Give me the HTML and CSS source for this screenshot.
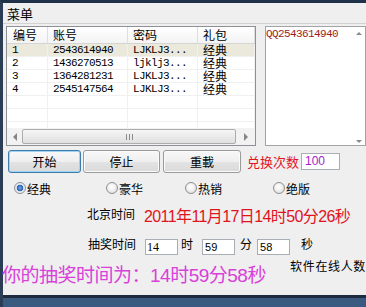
FILE: index.html
```html
<!DOCTYPE html>
<html>
<head>
<meta charset="utf-8">
<title>菜单</title>
<link rel="stylesheet" href="styles.css">
</head>
<body>
<div class="window">
  <div class="menubar">菜单</div>

  <div class="top">
    <div class="list">
      <div class="list-head">
        <div class="hcell">编号</div>
        <div class="hcell">账号</div>
        <div class="hcell">密码</div>
        <div class="hcell">礼包</div>
      </div>
      <div class="list-body">
        <div class="row sel">
          <div class="cell mono">1</div><div class="cell mono">2543614940</div><div class="cell mono">LJKLJ3...</div><div class="cell cjk">经典</div>
        </div>
        <div class="row">
          <div class="cell mono">2</div><div class="cell mono">1436270513</div><div class="cell mono">ljklj3...</div><div class="cell cjk">经典</div>
        </div>
        <div class="row">
          <div class="cell mono">3</div><div class="cell mono">1364281231</div><div class="cell mono">LJKLJ3...</div><div class="cell cjk">经典</div>
        </div>
        <div class="row">
          <div class="cell mono">4</div><div class="cell mono">2545147564</div><div class="cell mono">LJKLJ3...</div><div class="cell cjk">经典</div>
        </div>
        <div class="row"><div class="cell"></div><div class="cell"></div><div class="cell"></div><div class="cell"></div></div>
        <div class="row"><div class="cell"></div><div class="cell"></div><div class="cell"></div><div class="cell"></div></div>
        <div class="row row-partial"><div class="cell"></div><div class="cell"></div><div class="cell"></div><div class="cell"></div></div>
      </div>
      <div class="hscroll">
        <div class="sb-btn sb-left"><span class="tri-left"></span></div>
        <div class="thumb"><span class="grip"></span></div>
        <div class="sb-btn sb-right"><span class="tri-right"></span></div>
      </div>
    </div>

    <div class="memo">
      <div class="memo-text">QQ2543614940</div>
      <div class="vscroll"><span class="tri-up"></span><span class="tri-down"></span></div>
    </div>
  </div>

  <div class="btnrow">
    <div class="btn btn-focus btn-start">开始</div>
    <div class="btn btn-stop">停止</div>
    <div class="btn btn-reload">重載</div>
    <div class="exchange">兑换次数</div>
    <div class="numbox">100</div>
  </div>

  <div class="radios">
    <div class="radio-item"><span class="radio checked"></span><span class="rlabel">经典</span></div>
    <div class="radio-item"><span class="radio"></span><span class="rlabel">豪华</span></div>
    <div class="radio-item"><span class="radio"></span><span class="rlabel">热销</span></div>
    <div class="radio-item"><span class="radio"></span><span class="rlabel">绝版</span></div>
  </div>

  <div class="timerow">
    <div class="timelabel">北京时间</div>
    <div class="clock">2011年11月17日14时50分26秒</div>
  </div>

  <div class="drawrow">
    <div class="lbl">抽奖时间</div>
    <div class="field field-serif f-hour">14</div>
    <div class="lbl unit u-hour">时</div>
    <div class="field f-min">59</div>
    <div class="lbl unit u-min">分</div>
    <div class="field f-sec">58</div>
    <div class="lbl unit u-sec">秒</div>
  </div>

  <div class="bottomrow">
    <div class="draw-result">你的抽奖时间为：14时59分58秒</div>
    <div class="online">软件在线人数</div>
  </div>

  <div class="statusbar"></div>
</div>
</body>
</html>
```

FILE: styles.css
```css
* { box-sizing: border-box; }
html, body { margin: 0; padding: 0; }
body {
  width: 366px;
  height: 307px;
  overflow: hidden;
  background: #efefef;
  font-family: "Noto Sans CJK SC", "Liberation Sans", sans-serif;
  font-size: 12px;
  color: #000;
}
.window {
  width: 366px;
  height: 307px;
  display: flex;
  flex-direction: column;
  border-top: 3px solid #1f3049;
  border-left: 3px solid #2b3d55;
  background: #efefef;
}
.menubar {
  height: 21px;
  padding: 2px 0 0 4px;
  line-height: 18px;
  font-size: 13px;
  border-bottom: 1px solid #d2d2d2;
}

/* top section */
.top {
  display: flex;
  margin-top: 2px;
  height: 120px;
}
.list {
  margin-left: 3px;
  width: 250px;
  height: 120px;
  border: 1px solid #8e9096;
  background: #fff;
  display: flex;
  flex-direction: column;
}
.list-head {
  display: grid;
  grid-template-columns: 41px 80px 70px 57px;
  height: 17px;
  border-bottom: 1px solid #d5d5d5;
  background: linear-gradient(#ffffff, #f3f3f3);
}
.hcell {
  padding-left: 6px;
  line-height: 16px;
  border-right: 1px solid #dedede;
}
.hcell + .hcell { padding-left: 5px; }
.list-body {
  height: 84px;
}
.row {
  display: grid;
  grid-template-columns: 41px 80px 70px 57px;
  height: 13px;
  border-bottom: 1px solid #f0f0f0;
}
.row.row-partial {
  height: 6px;
  border-bottom: 0;
}
.row.sel { background: #ebe9db; }
.cell {
  padding-left: 5px;
  line-height: 12px;
  border-right: 1px solid #f0f0f0;
  white-space: nowrap;
}
.cjk { line-height: 12px; }
.mono {
  font-family: "Liberation Mono", monospace;
  font-size: 11px;
  letter-spacing: -0.6px;
}
.hscroll {
  height: 17px;
  display: flex;
  background: #f2f2f2;
}
.sb-btn {
  display: flex;
  align-items: center;
  justify-content: center;
}
.sb-left { width: 15px; }
.sb-right { width: 19px; }
.thumb {
  flex: 1;
  margin: 1px 0;
  border: 1px solid #acacac;
  border-radius: 2px;
  background: linear-gradient(#f6f6f6, #e0e0e0);
  display: flex;
  align-items: center;
  justify-content: center;
}
.grip {
  width: 7px;
  height: 6px;
  background: repeating-linear-gradient(90deg, #8a8a8a 0 1px, transparent 1px 3px);
}
.tri-left {
  width: 0; height: 0;
  border-top: 4px solid transparent;
  border-bottom: 4px solid transparent;
  border-right: 4px solid #858585;
}
.tri-right {
  width: 0; height: 0;
  border-top: 4px solid transparent;
  border-bottom: 4px solid transparent;
  border-left: 4px solid #858585;
}

.memo {
  margin-left: 9px;
  width: 101px;
  height: 120px;
  border: 1px solid #a3a3a3;
  background: #fff;
  display: flex;
}
.memo-text {
  flex: 1;
  padding-top: 1px;
  font-family: "Liberation Mono", monospace;
  font-size: 11px;
  letter-spacing: -0.6px;
  line-height: 12px;
  color: #a01c20;
}
.vscroll {
  width: 12px;
  display: flex;
  flex-direction: column;
  justify-content: space-between;
  align-items: center;
  padding: 5px 0 2px;
}
.tri-up {
  width: 0; height: 0;
  border-left: 3px solid transparent;
  border-right: 3px solid transparent;
  border-bottom: 3px solid #8a8a8a;
}
.tri-down {
  width: 0; height: 0;
  border-left: 3px solid transparent;
  border-right: 3px solid transparent;
  border-top: 3px solid #8a8a8a;
}

/* buttons row */
.btnrow {
  display: flex;
  align-items: flex-start;
  margin-top: 4px;
  height: 23px;
}
.btn {
  height: 23px;
  border: 1px solid #9a9a9a;
  border-radius: 3px;
  background: linear-gradient(#f8f8f8 0%, #efefef 50%, #e3e3e3 51%, #dadada 100%);
  box-shadow: inset 0 0 0 1px #fbfbfb;
  line-height: 21px;
  text-align: center;
  font-size: 12px;
}
.btn-focus {
  border-color: #3d7bad;
  box-shadow: inset 0 0 0 1px #9fd3f2;
}
.btn-start { margin-left: 5px; width: 73px; }
.btn-stop { margin-left: 2px; width: 77px; }
.btn-reload { margin-left: 3px; width: 78px; }
.exchange {
  margin-left: 6px;
  color: #e3161e;
  font-size: 13px;
  line-height: 23px;
}
.numbox {
  margin-left: 2px;
  margin-top: 3px;
  width: 39px;
  height: 17px;
  border: 1px solid #a9aeb5;
  background: #fff;
  padding-left: 3px;
  font-family: "Liberation Sans", sans-serif;
  font-size: 12px;
  line-height: 15px;
  color: #a41ccc;
}

/* radio row */
.radios {
  display: grid;
  grid-template-columns: 92px 79px 88px auto;
  margin-top: 8px;
  padding-left: 11px;
  height: 18px;
}
.radio-item {
  display: flex;
  align-items: flex-start;
}
.radio {
  width: 12px;
  height: 12px;
  margin-top: 1px;
  margin-right: 1px;
  border-radius: 50%;
  border: 1px solid #8d8f92;
  background: radial-gradient(circle at 45% 40%, #ffffff 0, #f2f2f2 40%, #d4d4d4 100%);
}
.radio.checked {
  background: radial-gradient(circle at 50% 50%, #6fa8e8 0, #2b62b4 3px, #dfe6ee 3.6px, #fafafa 100%);
}
.rlabel {
  line-height: 16px;
}

/* time row */
.timerow {
  display: flex;
  align-items: flex-start;
  margin-top: 5px;
  height: 23px;
  padding-left: 84px;
}
.timelabel { line-height: 20px; }
.clock {
  margin-left: 9px;
  margin-top: 3px;
  line-height: 20px;
  font-family: "Liberation Sans", "Noto Sans CJK SC", sans-serif;
  font-size: 16px;
  letter-spacing: -0.6px;
  color: #e1141c;
}

/* draw time row */
.drawrow {
  display: flex;
  align-items: flex-start;
  margin-top: 9px;
  height: 20px;
  padding-left: 85px;
}
.lbl { line-height: 16px; }
.field {
  margin-top: 3px;
  width: 33px;
  height: 16px;
  border: 1px solid #a9aeb5;
  background: #fff;
  padding-left: 2px;
  font-family: "Liberation Sans", sans-serif;
  font-size: 11px;
  line-height: 14px;
}
.field-serif {
  padding-left: 1px;
  font-family: "Liberation Serif", serif;
  font-size: 12px;
}
.f-hour { margin-left: 9px; }
.u-hour { margin-left: 3px; }
.f-min { margin-left: 9px; }
.u-min { margin-left: 5px; }
.f-sec { margin-left: 5px; }
.u-sec { margin-left: 11px; }

/* bottom */
.bottomrow {
  display: flex;
  justify-content: space-between;
  align-items: flex-start;
  margin-top: 2px;
  height: 30px;
}
.draw-result {
  margin-top: 7px;
  margin-left: -1px;
  font-family: "Liberation Sans", "Noto Sans CJK SC", sans-serif;
  font-size: 19px;
  line-height: 22px;
  letter-spacing: -0.5px;
  color: #d93fd9;
  white-space: nowrap;
}
.online {
  line-height: 16px;
  letter-spacing: 0.65px;
  white-space: nowrap;
}
.statusbar {
  margin-top: auto;
  height: 12px;
  background: linear-gradient(#1c2b3e 0 3px, #3a5a80 3px);
}
```
